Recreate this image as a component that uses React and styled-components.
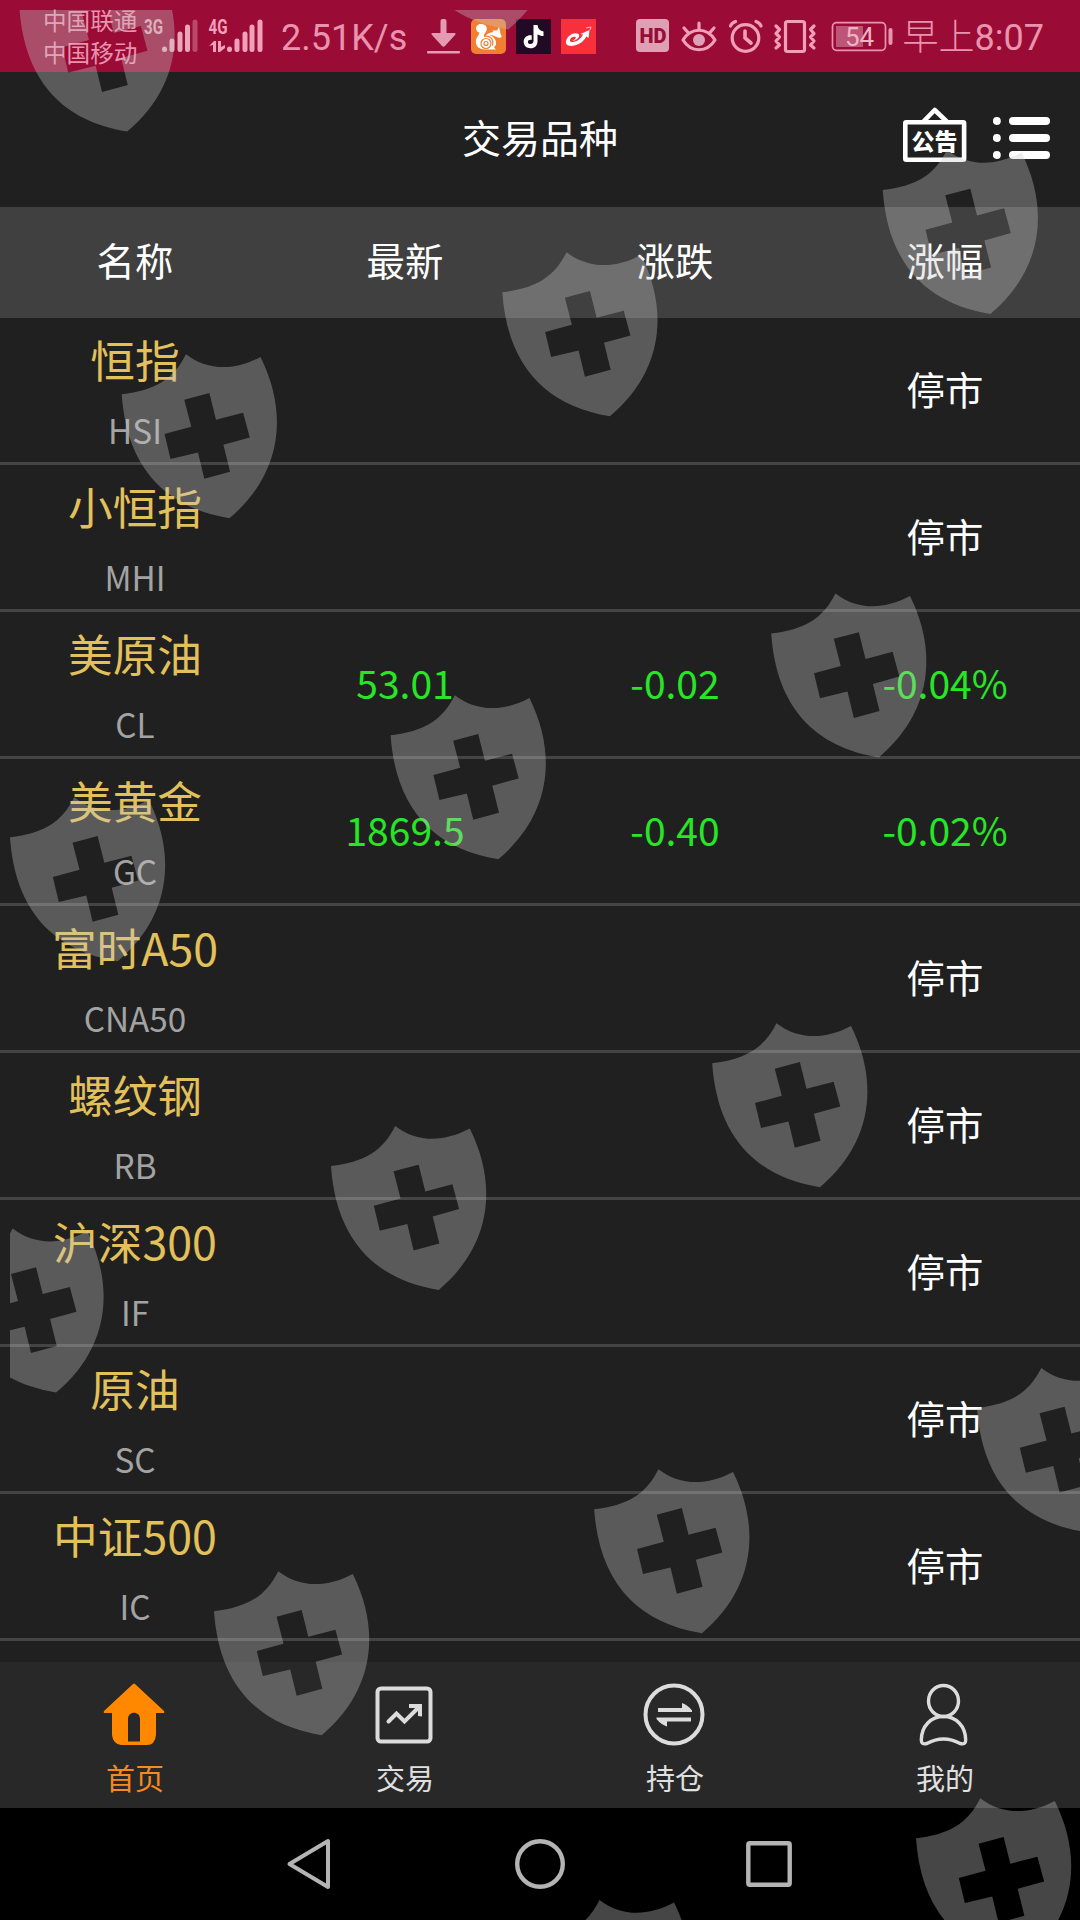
import styled, { createGlobalStyle } from "styled-components";

const GlobalStyle = createGlobalStyle`
  * {
    box-sizing: border-box;
  }

  body {
    margin: 0;
    background: #000;
    font-family: "Noto Sans CJK SC", "Noto Sans", sans-serif;
  }
`;

const Screen = styled.div`
  position: relative;
  display: flex;
  flex-direction: column;
  width: 1080px;
  height: 1920px;
  overflow: hidden;
  background: #202020;
`;

/* ---------- status bar ---------- */

const StyledStatusBar = styled.div`
  display: flex;
  align-items: center;
  height: 72px;
  padding-left: 43px;
  background: #9a0c35;
  color: #e993ae;
`;

const Carriers = styled.div`
  width: 101px;
  font-size: 23.6px;
  font-weight: 400;
  line-height: 32px;
  white-space: nowrap;
`;

const StatusText = styled.div`
  width: ${(props) => props.$width}px;
  margin-left: ${(props) => props.$gap}px;
  font-family: Roboto, "Noto Sans CJK SC", sans-serif;
  font-size: 36px;
  font-weight: ${(props) => props.$weight || 400};
  line-height: 72px;
  white-space: nowrap;
  padding-top: 4px;
`;

const Clock = styled.span`
  font-weight: 400;
`;

const StatusIcon = styled.svg`
  flex: none;
  display: block;
  margin-left: ${(props) => props.$gap || 0}px;
`;

/* ---------- header ---------- */

const Header = styled.header`
  display: grid;
  grid-template-columns: 270px 1fr 270px;
  align-items: center;
  height: 135px;
  color: #fff;
`;

const Title = styled.h1`
  grid-column: 2;
  margin: 0;
  padding-bottom: 7px;
  text-align: center;
  font-size: 39px;
  font-weight: 400;
  line-height: 56px;
`;

const Actions = styled.div`
  display: flex;
  gap: 26px;
  padding-left: 93px;
  padding-bottom: 9px;
`;

/* ---------- quotes ---------- */

const Columns = styled.div`
  display: grid;
  grid-template-columns: repeat(4, 1fr);
  align-items: center;
  text-align: center;
`;

const TableHead = styled(Columns)`
  height: 111px;
  padding-bottom: 8px;
  background: #404040;
  color: #fff;
  font-size: 38.4px;
  line-height: 54px;
`;

const TableRow = styled(Columns)`
  height: 147px;
  border-bottom: 3px solid #444;
`;

const Product = styled.div`
  display: flex;
  flex-direction: column;
  align-self: start;
  height: 144px;
  padding-top: 5px;
`;

const Name = styled.span`
  height: 72px;
  font-size: 44.7px;
  line-height: 72px;
  color: #e2c05a;
`;

const Code = styled.span`
  height: 67px;
  font-size: 33.3px;
  line-height: 70px;
  color: #a3a3a3;
`;

const Value = styled.span`
  padding-bottom: 4px;
  font-size: 39px;
  line-height: 56px;
  color: #26e626;
`;

const Closed = styled.span`
  grid-column: 4;
  padding-bottom: 4px;
  font-size: 38.4px;
  line-height: 56px;
  color: #fff;
`;

/* ---------- bottom bars ---------- */

const TabBar = styled.nav`
  display: grid;
  grid-template-columns: repeat(4, 1fr);
  height: 146px;
  margin-top: 21px;
  background: #282828;
`;

const Tab = styled.div`
  display: flex;
  flex-direction: column;
  align-items: center;
  gap: 10px;
  padding-top: 21px;
  color: ${(props) => (props.$active ? "#f58a1f" : "#e0e0e0")};
  font-size: 29px;
  line-height: 42px;

  svg {
    margin-right: 2px;
  }
`;

const NavBar = styled.div`
  display: grid;
  grid-template-columns: repeat(3, 229px);
  justify-content: center;
  justify-items: center;
  align-items: center;
  flex: 1;
  background: #000;
`;

const Overlay = styled.svg`
  position: absolute;
  inset: 0;
  pointer-events: none;
`;

const products = [
  { name: "恒指", code: "HSI" },
  { name: "小恒指", code: "MHI" },
  { name: "美原油", code: "CL", values: ["53.01", "-0.02", "-0.04%"] },
  { name: "美黄金", code: "GC", values: ["1869.5", "-0.40", "-0.02%"] },
  { name: "富时A50", code: "CNA50" },
  { name: "螺纹钢", code: "RB" },
  { name: "沪深300", code: "IF" },
  { name: "原油", code: "SC" },
  { name: "中证500", code: "IC" },
];

const shields = [
  [19.4, 7.6],
  [400.5, -94.5],
  [121.7, 394.3],
  [502.3, 292.3],
  [882.7, 190],
  [10, 837.3],
  [390.6, 735.3],
  [771.2, 633.5],
  [-51.6, 1268.6],
  [331, 1166],
  [712.2, 1063.3],
  [214, 1611.3],
  [594.2, 1509.3],
  [977, 1408],
  [916, 1838.3],
  [535.3, 1940],
];

function StatusBar() {
  return (
    <StyledStatusBar>
      <Carriers>
        <div>中国联通</div>
        <div>中国移动</div>
      </Carriers>

      <StatusIcon width="56" height="72" viewBox="144 0 56 72">
        <text
          x="144"
          y="33.5"
          fontSize="20"
          fontWeight="700"
          fontFamily="Roboto, sans-serif"
          textLength="19"
          lengthAdjust="spacingAndGlyphs"
          fill="#e5a3b7"
        >
          3G
        </text>
        <g stroke="#e9a5ba" strokeWidth="5" strokeLinecap="round">
          <path d="M164.5 49v0.5M172 41v8.5M180 34v15.5M187.5 27v22.5" />
          <path d="M195 22v27.5" stroke="#b9486b" />
        </g>
      </StatusIcon>

      <StatusIcon $gap={8} width="56" height="72" viewBox="208 0 56 72">
        <text
          x="208.5"
          y="33.5"
          fontSize="20"
          fontWeight="700"
          fontFamily="Roboto, sans-serif"
          textLength="19"
          lengthAdjust="spacingAndGlyphs"
          fill="#f0a0b9"
        >
          4G
        </text>
        <g stroke="#f0a0b9" strokeWidth="5" strokeLinecap="round">
          <path d="M229.5 49v0.5M237 41v8.5M245 34v15.5M252 27v22.5M260 22v27.5" />
        </g>
        <path d="M209 46l5-5h2v11h-3v-7zM218 41h3v6l4-2v3l-5 4h-2z" fill="#f0a0b9" />
      </StatusIcon>

      <StatusText $gap={17} $width={128}>
        2.51K/s
      </StatusText>

      <StatusIcon $gap={17.5} width="34" height="72" viewBox="427 0 34 72">
        <path
          d="M440.5 21q0-2 2-2h2q2 0 2 2v12h8q2 0 .7 1.8l-10.2 11.2q-1.5 1.4-3 0l-10.2-11.2q-1.3-1.8.7-1.8h8z"
          fill="#e39ab2"
        />
        <rect x="427" y="51" width="33" height="2.5" rx="1" fill="#e39ab2" />
      </StatusIcon>

      {/* squirrel */}
      <StatusIcon $gap={10} width="35" height="35" viewBox="0 0 35 35">
        <rect width="35" height="35" rx="5" fill="#f17e31" />
        <path
          d="M5 10C5 6 8 4.5 11 5c5 .8 6 5 3.500 8.500-1.500 2-2 3-1 4.500 2-3 5-4.500 9-5-1-1-1-1.500-.5-1.500h4L28 8l1 4c0 3 2 4 1.500 6-1 1.500-4 .5-6-.5-2-1-4-1.500-6-1 5 1 7 5 6.500 9l-2 3 2 2H14C8 30.500 4 27 5 21c.5-3 3-4.500 3.500-7.500-1.500.2-3-1.500-3.500-3.500z"
          fill="#fff"
        />
        <g fill="none" stroke="#f17e31" strokeWidth="1.2">
          <circle cx="15" cy="24.5" r="5" />
          <circle cx="15" cy="24.5" r="2" />
          <path d="M13 17.5c6-1.500 10 3 8.500 9" />
        </g>
      </StatusIcon>

      {/* music note */}
      <StatusIcon $gap={10} width="35" height="35" viewBox="0 0 35 35">
        <rect width="35" height="35" fill="#210b24" />
        <path
          d="M17.5 6h4c.5 4 2.5 6 6 6.5v4.5c-2.5 0-4.3-.7-6-1.8v7c0 4.5-3 7-6.8 7-4.2 0-7-2.8-7-6.5 0-4.5 3.6-7 8-6.4v4.6c-2-.5-3.8.3-3.8 2 0 1.3 1.2 2.2 2.6 2.2 1.8 0 3-1.2 3-3z"
          fill="#fff"
        />
      </StatusIcon>

      {/* rising arrow */}
      <StatusIcon $gap={10} width="35" height="35" viewBox="0 0 35 35">
        <rect width="35" height="35" fill="#f8303b" />
        <path
          d="M5 22c1.500-6 8.500-9.500 12.500-7 2.500 2.500-2 6.500-6 7 2-1 4-3 3-4-2.500-1.200-6 1.500-5.500 4 1.500 2.500 10 .5 13-6.500l-2.500-.5 9-4-1 8-2.200-1.500c-4 8.500-16 11.500-19.500 8-1-1-1-2.200-.8-3.500z"
          fill="#fff"
        />
        <path d="M25 9l5-1-1 3" fill="none" stroke="#ffb8bd" strokeWidth="1" />
      </StatusIcon>

      <StatusIcon $gap={40} width="34" height="34" viewBox="0 0 34 34">
        <rect width="33" height="33" rx="4" fill="#dfa0b5" />
        <text
          x="3.5"
          y="24.3"
          fontSize="21"
          fontWeight="900"
          fontFamily="Roboto, sans-serif"
          textLength="27"
          lengthAdjust="spacingAndGlyphs"
          fill="#9a0c35"
        >
          HD
        </text>
      </StatusIcon>

      <StatusIcon
        $gap={11}
        width="36"
        height="72"
        viewBox="681 0 36 72"
        fill="none"
        stroke="#f09fb9"
        strokeWidth="3.2"
        strokeLinecap="round"
      >
        <path d="M683 40c8-13 24-13 32 0-8 13-24 13-32 0z" strokeLinejoin="round" />
        <circle cx="699" cy="40" r="6" fill="#dfa0b5" stroke="none" />
        <path d="M699 23v6M684 28l4 4.5M714 28l-4 4.5" />
      </StatusIcon>

      <StatusIcon
        $gap={12}
        width="34"
        height="72"
        viewBox="729 0 34 72"
        fill="none"
        stroke="#f09fb9"
        strokeWidth="3.2"
        strokeLinecap="round"
      >
        <circle cx="745.5" cy="38" r="13.3" />
        <path d="M730.5 26q1-3 5-4.5M761 26q-1-3-5-4.5" />
        <path d="M745 31v7l6 5" strokeWidth="3.6" />
      </StatusIcon>

      <StatusIcon
        $gap={10}
        width="44"
        height="72"
        viewBox="773 0 44 72"
        fill="none"
        stroke="#f09fb9"
        strokeWidth="3.2"
        strokeLinecap="round"
        strokeLinejoin="round"
      >
        <rect x="785.5" y="21.5" width="19" height="30" rx="2" />
        <path d="M776 26l3.5 3.5-3.5 4 3.5 3.5-3.5 4 3.5 4-3.5 3M814 26l-3.5 3.5 3.5 4-3.5 3.5 3.5 4-3.5 4 3.5 3" />
      </StatusIcon>

      <StatusIcon $gap={14} width="62" height="72" viewBox="831 0 62 72">
        <rect
          x="832.5"
          y="22.7"
          width="53"
          height="27.6"
          rx="4"
          fill="none"
          stroke="#e993ae"
          strokeWidth="1.7"
        />
        <rect x="836" y="26" width="27" height="21" fill="#bd5577" />
        <rect x="888.5" y="28" width="4" height="17" rx="2" fill="#e993ae" />
        <text
          x="859.5"
          y="46"
          fontSize="26"
          fontFamily="Roboto, sans-serif"
          textAnchor="middle"
          fill="#f3b1c5"
        >
          54
        </text>
      </StatusIcon>

      <StatusText $gap={10} $width={140} $weight={300}>
        早上<Clock>8:07</Clock>
      </StatusText>
    </StyledStatusBar>
  );
}

function NoticeIcon() {
  return (
    <svg width="64" height="56" viewBox="903 107 64 56">
      <g fill="none" stroke="#fff" strokeWidth="4.6">
        <rect x="905.3" y="122.3" width="58.8" height="37.4" rx="1" />
        <path d="M923.5 121.5l11.2-11.5 12 11.5" strokeLinejoin="round" />
      </g>
      <text
        x="934.5"
        y="150"
        fontSize="23"
        fontWeight="900"
        fontFamily="Noto Sans CJK SC, sans-serif"
        textAnchor="middle"
        fill="#fff"
      >
        公告
      </text>
    </svg>
  );
}

function MenuIcon() {
  return (
    <svg width="58" height="56" viewBox="993 107 58 56" fill="#fff">
      {[121, 138, 155].map((y) => (
        <g key={y}>
          <circle cx="996.8" cy={y} r="4" />
          <rect x="1009" y={y - 4} width="41" height="8" rx="4" />
        </g>
      ))}
    </svg>
  );
}

function HomeIcon() {
  return (
    <svg width="62" height="63" viewBox="0 0 62 63">
      <path
        d="M30 1q1-.8 2 0L61 28q1 2-1 2h-7v22q-1 10-9 10H18q-8-1-9-10V30H2q-2 0-1-2zM25 58.5h12V36c0-8.5-12-8.5-12 0z"
        fill="#ff8800"
        fillRule="evenodd"
      />
    </svg>
  );
}

function TradeIcon() {
  return (
    <svg width="62" height="63" viewBox="0 0 62 63" fill="none" stroke="#dcdcdc" strokeWidth="4">
      <rect x="4.5" y="5.5" width="53" height="53" rx="3.5" />
      <path d="M15.5 38.5l8-8 8 8L45 25" strokeLinecap="round" />
      <path d="M36 21h13v12.5l-4-.5v-6l-3-2h-6z" fill="#dcdcdc" stroke="none" />
    </svg>
  );
}

function PositionIcon() {
  return (
    <svg width="62" height="63" viewBox="0 0 62 63">
      <ellipse cx="31" cy="31.5" rx="28.5" ry="29" fill="none" stroke="#dcdcdc" strokeWidth="4" />
      <path
        d="M15 25h24v-5q6 2 10 7.5v1.5H15zM48 34.5v4H24v5q-6-2-10.5-7.5v-1.5z"
        fill="#dcdcdc"
      />
    </svg>
  );
}

function UserIcon() {
  return (
    <svg width="62" height="63" viewBox="0 0 62 63" fill="none" stroke="#dcdcdc" strokeWidth="3.4">
      <ellipse cx="30.5" cy="18" rx="15" ry="15.5" />
      <path
        d="M30.5 33.5C18 33.500 8.500 43 8.300 57q0 5 5.500 3.500 16.700-9 33.400 0 5.500 1.500 5.500-3.500C52.500 43 43 33.500 30.500 33.500z"
        strokeLinejoin="round"
      />
    </svg>
  );
}

const tabs = [
  { label: "首页", icon: <HomeIcon />, active: true },
  { label: "交易", icon: <TradeIcon /> },
  { label: "持仓", icon: <PositionIcon /> },
  { label: "我的", icon: <UserIcon /> },
];

function ProductRow({ product }) {
  const { name, code, values } = product;

  return (
    <TableRow>
      <Product>
        <Name>{name}</Name>
        <Code>{code}</Code>
      </Product>
      {values ? (
        values.map((value) => <Value key={value}>{value}</Value>)
      ) : (
        <Closed>停市</Closed>
      )}
    </TableRow>
  );
}

function ShieldOverlay() {
  return (
    <Overlay width="1080" height="1920" viewBox="0 0 1080 1920">
      <defs>
        <clipPath id="inner">
          <rect x="10" y="10" width="1070" height="1910" />
        </clipPath>
        <path
          id="shield"
          d="M0 0C100-12 155-45 192-120C258-70 335-70 415-112C500 60 478 240 322 371C130 340 15 220 0 0ZM187 16L208 97L128 119L146 194L228 174L247 253L324 232L304 151L383 129L363 55L282 76L262-4Z"
          fillRule="evenodd"
        />
      </defs>
      <g clipPath="url(#inner)" fill="rgba(200, 200, 200, 0.35)">
        {shields.map(([x, y]) => (
          <use
            key={`${x}-${y}`}
            href="#shield"
            transform={`translate(${x} ${y}) scale(0.3345 0.334)`}
          />
        ))}
      </g>
    </Overlay>
  );
}

function App() {
  return (
    <>
      <GlobalStyle />
      <Screen>
        <StatusBar />

        <Header>
          <Title>交易品种</Title>
          <Actions>
            <NoticeIcon />
            <MenuIcon />
          </Actions>
        </Header>

        <TableHead>
          <span>名称</span>
          <span>最新</span>
          <span>涨跌</span>
          <span>涨幅</span>
        </TableHead>

        {products.map((product) => (
          <ProductRow key={product.code} product={product} />
        ))}

        <TabBar>
          {tabs.map((tab) => (
            <Tab key={tab.label} $active={tab.active}>
              {tab.icon}
              {tab.label}
            </Tab>
          ))}
        </TabBar>

        <NavBar>
          <svg width="56" height="56" viewBox="0 0 56 56">
            <path
              d="M45 5v46L6.5 28z"
              fill="none"
              stroke="#b4b4b4"
              strokeWidth="4"
              strokeLinejoin="round"
            />
          </svg>
          <svg width="56" height="56" viewBox="0 0 56 56">
            <circle cx="28" cy="28" r="22.8" fill="none" stroke="#b4b4b4" strokeWidth="4.4" />
          </svg>
          <svg width="56" height="56" viewBox="0 0 56 56">
            <rect
              x="7.3"
              y="7.3"
              width="41.4"
              height="41.4"
              rx="1.5"
              fill="none"
              stroke="#b4b4b4"
              strokeWidth="4.4"
            />
          </svg>
        </NavBar>

        <ShieldOverlay />
      </Screen>
    </>
  );
}

export default App;
